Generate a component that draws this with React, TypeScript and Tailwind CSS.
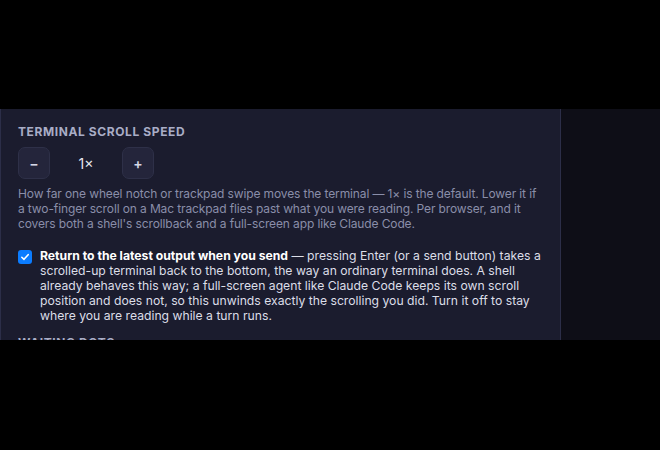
import { FC } from "react";

const font = { fontFamily: "Inter, 'Noto Sans', sans-serif" };

const StepButton: FC<{ label: string }> = ({ label }) => (
  <button className="w-[32px] h-[32px] rounded-[7px] bg-[#24253b] border border-[#2e3048] text-[#d6d8e6] text-[14px] font-semibold flex items-center justify-center">
    {label}
  </button>
);

const App: FC = () => {
  return (
    <div className="w-[660px] h-[450px] bg-black flex flex-col" style={font}>
      <div className="h-[109px] shrink-0" />
      <div className="h-[231px] flex shrink-0">
        <div className="w-[561px] shrink-0 bg-[#1b1c2e] border-l border-r border-[#2c2e48] overflow-hidden pl-[17px] pr-[16px] pt-[15px]">
          <div className="text-[12px] font-bold tracking-[0.05em] text-[#a9adc6] leading-[16px]">
            TERMINAL SCROLL SPEED
          </div>
          <div className="flex items-center mt-[7px]">
            <StepButton label="−" />
            <div className="w-[72px] text-center text-[14px] text-[#e6e7ef]">
              1×
            </div>
            <StepButton label="+" />
          </div>
          <p className="mt-[7px] text-[12px] tracking-[-0.01em] leading-[15px] text-[#8a8ea9]">
            How far one wheel notch or trackpad swipe moves the terminal — 1× is
            the default. Lower it if a two-finger scroll on a Mac trackpad flies
            past what you were reading. Per browser, and it covers both a
            shell's scrollback and a full-screen app like Claude Code.
          </p>
          <label className="flex items-start gap-[8px] mt-[17px]">
            <span className="mt-[2px] w-[14px] h-[14px] shrink-0 rounded-[3px] bg-[#0b7cff] flex items-center justify-center">
              <svg viewBox="0 0 12 12" className="w-[10px] h-[10px]">
                <path
                  d="M2.2 6.3 L4.8 8.8 L9.8 3.2"
                  fill="none"
                  stroke="white"
                  strokeWidth="1.9"
                  strokeLinecap="round"
                  strokeLinejoin="round"
                />
              </svg>
            </span>
            <span className="text-[12.2px] leading-[15px] text-[#dcdee8]">
              <b className="font-bold text-white">
                Return to the latest output when you send
              </b>{" "}
              — pressing Enter (or a send button) takes a scrolled-up terminal
              back to the bottom, the way an ordinary terminal does. A shell
              already behaves this way; a full-screen agent like Claude Code
              keeps its own scroll position and does not, so this unwinds
              exactly the scrolling you did. Turn it off to stay where you are
              reading while a turn runs.
            </span>
          </label>
          <div className="mt-[12px] text-[12px] font-bold tracking-[0.05em] text-[#a9adc6] leading-[16px]">
            WAITING DOTS
          </div>
        </div>
        <div className="flex-1 bg-[#0e0e17]" />
      </div>
      <div className="flex-1" />
    </div>
  );
};

export default App;
